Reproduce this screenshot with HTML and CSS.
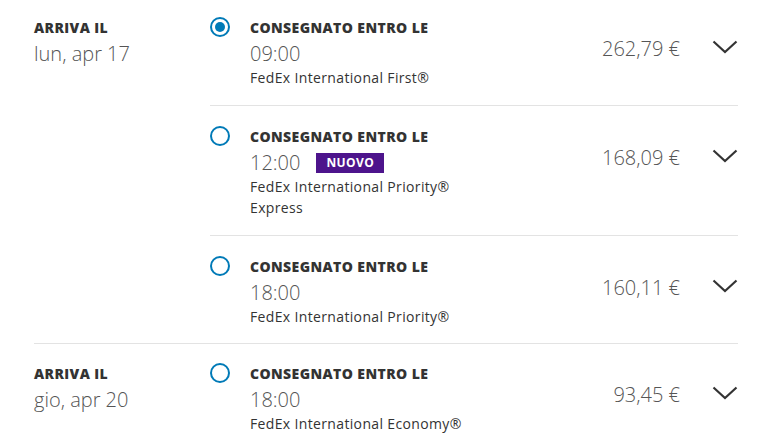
FILE: index.html
```html
<!DOCTYPE html>
<html lang="it">
<head>
<meta charset="utf-8">
<link rel="stylesheet" href="styles.css">
</head>
<body>
<div class="list">
  <section class="group">
    <div class="arrive">
      <div class="label">ARRIVA IL</div>
      <div class="date">lun, apr 17</div>
    </div>
    <div class="options">
      <div class="option">
        <span class="radio checked"></span>
        <div class="info">
          <div class="label">CONSEGNATO ENTRO LE</div>
          <div class="time">09:00</div>
          <div class="service">FedEx International First®</div>
        </div>
        <div class="price">262,79 €</div>
        <svg class="chev" width="26" height="14" viewBox="0 0 26 14"><path d="M1.5 1.5 L13 12 L24.5 1.5" fill="none" stroke="#333" stroke-width="2.2"/></svg>
      </div>
      <div class="option">
        <span class="radio"></span>
        <div class="info">
          <div class="label">CONSEGNATO ENTRO LE</div>
          <div class="time">12:00 <span class="badge">NUOVO</span></div>
          <div class="service">FedEx International Priority®<br>Express</div>
        </div>
        <div class="price">168,09 €</div>
        <svg class="chev" width="26" height="14" viewBox="0 0 26 14"><path d="M1.5 1.5 L13 12 L24.5 1.5" fill="none" stroke="#333" stroke-width="2.2"/></svg>
      </div>
      <div class="option">
        <span class="radio"></span>
        <div class="info">
          <div class="label">CONSEGNATO ENTRO LE</div>
          <div class="time">18:00</div>
          <div class="service">FedEx International Priority®</div>
        </div>
        <div class="price">160,11 €</div>
        <svg class="chev" width="26" height="14" viewBox="0 0 26 14"><path d="M1.5 1.5 L13 12 L24.5 1.5" fill="none" stroke="#333" stroke-width="2.2"/></svg>
      </div>
    </div>
  </section>
  <section class="group">
    <div class="arrive">
      <div class="label">ARRIVA IL</div>
      <div class="date">gio, apr 20</div>
    </div>
    <div class="options">
      <div class="option">
        <span class="radio"></span>
        <div class="info">
          <div class="label">CONSEGNATO ENTRO LE</div>
          <div class="time">18:00</div>
          <div class="service">FedEx International Economy®</div>
        </div>
        <div class="price">93,45 €</div>
        <svg class="chev" width="26" height="14" viewBox="0 0 26 14"><path d="M1.5 1.5 L13 12 L24.5 1.5" fill="none" stroke="#333" stroke-width="2.2"/></svg>
      </div>
    </div>
  </section>
</div>
</body>
</html>
```
FILE: styles.css
```css
* { box-sizing: border-box; }
html, body { margin: 0; padding: 0; background: #fff; }
body { font-family: "Open Sans", "Liberation Sans", sans-serif; color: #333; }
.list { padding: 0 24px 0 34px; }
.group { display: flex; }
.group + .group { border-top: 1px solid #e3e3e3; }
.arrive { width: 176px; flex: none; padding-top: 19px; }
.group + .group .arrive { padding-top: 21px; }
.label { font-size: 14px; font-weight: 800; line-height: 18px; color: #333; letter-spacing: 0.4px; }
.date { font-size: 20px; font-weight: 300; line-height: 28px; color: #555; margin-top: 3px; }
.options { flex: 1; }
.option { display: flex; align-items: flex-start; padding: 19px 0 17px; }
.option:last-child { padding-bottom: 16px; }
.option + .option { border-top: 1px solid #e3e3e3; padding-top: 22px; }
.group + .group .option { padding-top: 21px; }
.radio { flex: none; width: 20px; height: 20px; border: 2.5px solid #007ab7; border-radius: 50%; margin: -2px 20px 0 0; position: relative; }
.radio.checked::after { content: ""; position: absolute; left: 2.5px; top: 2.5px; width: 10px; height: 10px; border-radius: 50%; background: #007ab7; }
.info { flex: 1; }
.time { font-size: 20px; font-weight: 300; line-height: 26px; color: #555; margin-top: 4px; display: flex; align-items: center; gap: 16px; }
.badge { background: #4d148c; color: #fff; font-size: 12px; font-weight: 700; line-height: 20px; padding: 0 10px; letter-spacing: 0.4px; }
.service { font-size: 14px; line-height: 21px; color: #333; letter-spacing: 0.35px; }
.price { font-size: 20px; font-weight: 300; line-height: 28px; color: #555; margin-top: 16px; }
.chev { flex: none; margin: 21px 0 0 32px; }
```
